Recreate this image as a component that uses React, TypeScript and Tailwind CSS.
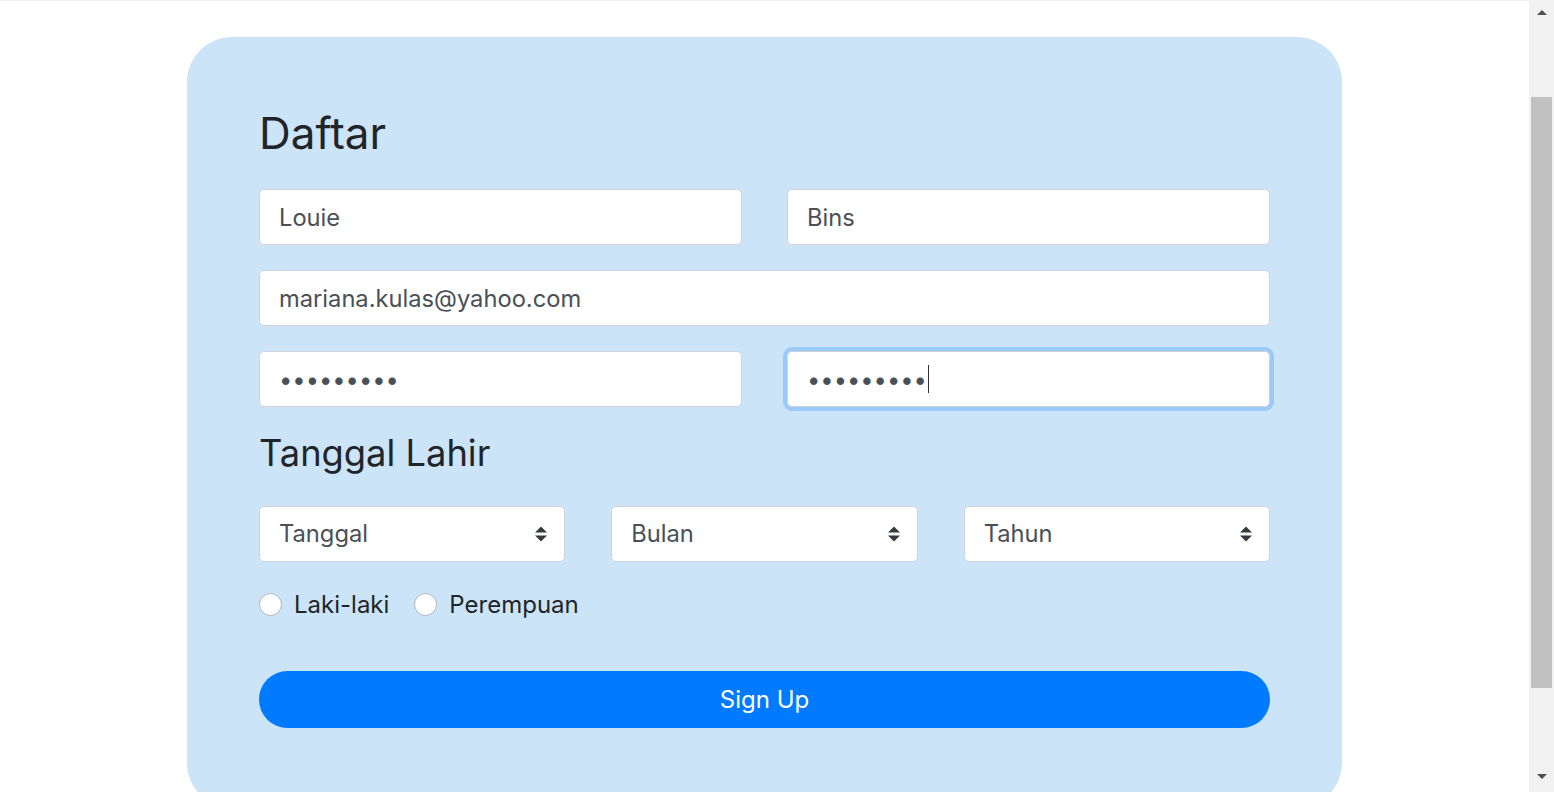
import React from 'react';

const inputCls =
	'block w-full h-[56px] rounded-[5px] border border-[#ced4da] bg-white px-[19px] text-[23.7px] text-[#495057] outline-none';

function SelectBox({ label }: { label: string }) {
	return (
		<div className="relative">
			<select className="block w-full h-[56px] appearance-none rounded-[5px] border border-[#ced4da] bg-white pl-[19px] pr-[40px] text-[23.7px] text-[#495057] outline-none">
				<option>{label}</option>
			</select>
			<svg
				viewBox="0 0 4 5"
				className="pointer-events-none absolute right-[18px] top-1/2 h-[15px] w-[12px] -translate-y-1/2"
			>
				<path d="M2 0L0 2h4zm0 5L0 3h4z" fill="#343a40" />
			</svg>
		</div>
	);
}

function Radio({ label }: { label: string }) {
	return (
		<label className="flex items-center gap-[12px]">
			<input
				type="radio"
				name="gender"
				className="h-[23px] w-[23px] appearance-none rounded-full border border-[#adb5bd] bg-white"
			/>
			<span className="text-[24px] leading-[29px] text-[#212529]">{label}</span>
		</label>
	);
}

export default function App() {
	return (
		<div className="flex h-screen overflow-hidden bg-white font-['Inter',sans-serif]">
			<main className="flex-1">
				<div className="h-px bg-[#f2f2f2]" />
				<form className="mx-auto mt-[36px] w-[1155px] rounded-[45px] bg-[#cce4f7] px-[72px] pt-[69px] pb-[80px]">
					<h1 className="text-[44px] leading-[54px] text-[#212529]">Daftar</h1>

					<div className="mt-[29px] flex flex-col gap-[25px]">
						<div className="grid grid-cols-2 gap-x-[45px]">
							<input className={inputCls} defaultValue="Louie" />
							<input className={inputCls} defaultValue="Bins" />
						</div>
						<input className={inputCls} defaultValue="mariana.kulas@yahoo.com" />
						<div className="grid grid-cols-2 gap-x-[45px]">
							<input type="password" className={inputCls} defaultValue="123456789" />
							<div className="relative">
								<input
									type="password"
									className={`${inputCls} border-[#80bdff] shadow-[0_0_0_4px_rgba(0,123,255,0.25)]`}
									defaultValue="123456789"
								/>
								{/* text caret */}
								<span className="pointer-events-none absolute left-[141px] top-[14px] h-[28px] w-px bg-[#333]" />
							</div>
						</div>
					</div>

					<h2 className="mt-[24px] text-[36.3px] leading-[44px] text-[#212529]">Tanggal Lahir</h2>

					<div className="mt-[31px] grid grid-cols-3 gap-x-[46px]">
						<SelectBox label="Tanggal" />
						<SelectBox label="Bulan" />
						<SelectBox label="Tahun" />
					</div>

					<div className="mt-[28px] flex items-center gap-[25px]">
						<Radio label="Laki-laki" />
						<Radio label="Perempuan" />
					</div>

					<button
						type="button"
						className="mt-[52px] block h-[57px] w-full rounded-full bg-[#007bff] text-[24px] text-white"
					>
						Sign Up
					</button>
				</form>
			</main>

			<aside className="flex w-[25px] flex-col bg-[#f1f1f1]">
				<div className="flex h-[17px] items-end justify-center pb-[2px]">
					<div className="h-0 w-0 border-x-[5px] border-b-[5px] border-x-transparent border-b-[#505050]" />
				</div>
				<div className="h-[80px]" />
				<div className="mx-[2px] h-[591px] bg-[#c1c1c1]" />
				<div className="flex-1" />
				<div className="flex h-[22px] items-start justify-center pt-[4px]">
					<div className="h-0 w-0 border-x-[5px] border-t-[5px] border-x-transparent border-t-[#505050]" />
				</div>
			</aside>
		</div>
	);
}
